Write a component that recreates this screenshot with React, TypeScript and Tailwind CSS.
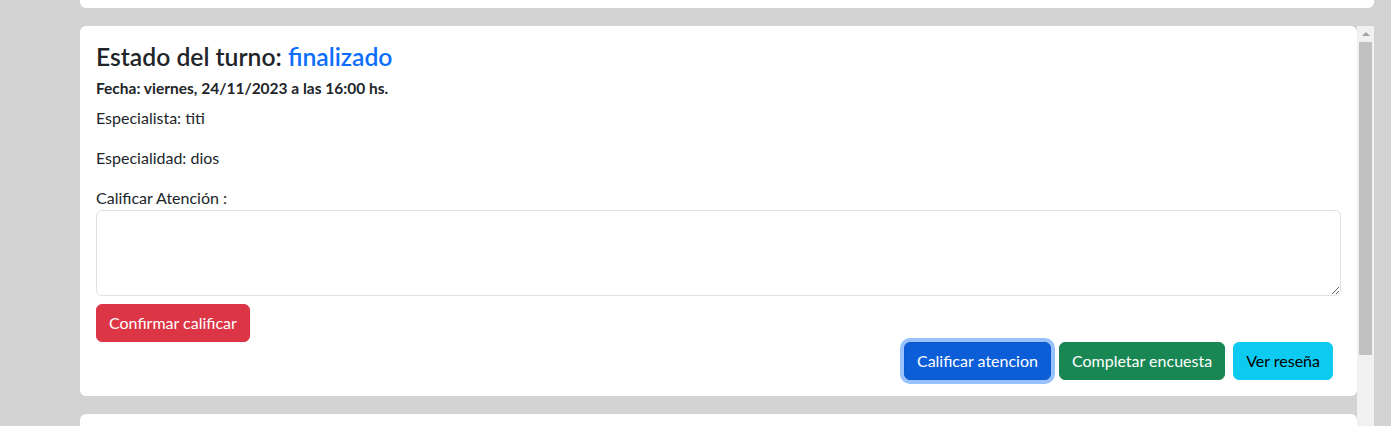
import React from 'react';

function Card({ children }: { children?: React.ReactNode }) {
  return <div className="rounded-md bg-white">{children}</div>;
}

function FakeScrollbar() {
  return (
    <div className="flex w-[17px] shrink-0 flex-col items-center bg-[#f1f1f1]">
      {/* up arrow button */}
      <div className="flex h-[16px] w-full items-center justify-center">
        <span className="block h-0 w-0 border-x-[4px] border-b-[4px] border-x-transparent border-b-[#a3a3a3]" />
      </div>
      {/* thumb */}
      <div className="h-[313px] w-[13px] bg-[#c1c1c1]" />
    </div>
  );
}

export default function App() {
  return (
    <div className="h-[426px] overflow-hidden bg-[#d3d3d3] font-['Segoe_UI',Lato,'Noto_Sans',sans-serif] text-[#212529]">
      <div className="ml-[80px] flex w-[1294px] flex-col gap-[18px]">
        {/* previous card, scrolled mostly out of view */}
        <div className="h-[8px] rounded-b-md bg-white" />

        <div className="flex">
          <div className="flex flex-1 flex-col gap-[18px]">
            <Card>
              <div className="flex flex-col p-4">
                <h4 className="mb-2 text-[24.7px] leading-[29px] font-semibold">
                  Estado del turno: <span className="text-[#0d6efd]">finalizado</span>
                </h4>
                <h6 className="mb-2 text-[15.5px] leading-[19px] font-bold">
                  Fecha: viernes, 24/11/2023 a las 16:00 hs.
                </h6>
                <p className="mb-4 text-[16px] leading-6">Especialista: titi</p>
                <p className="mb-4 text-[16px] leading-6">Especialidad: dios</p>
                <label className="text-[16px] leading-6">Calificar Atención :</label>
                <textarea className="h-[86px] w-full resize-y rounded-md border border-[#dee2e6] bg-white px-3 py-1.5 text-[16px] outline-none" />
                <div className="mt-2">
                  <button className="rounded-md border border-[#dc3545] bg-[#dc3545] px-3 py-1.5 text-[16px] leading-6 text-white">
                    Confirmar calificar
                  </button>
                </div>
                <div className="flex justify-end">
                  <button className="mr-2 rounded-md border border-[#0a58ca] bg-[#0b5ed7] px-3 py-1.5 text-[16px] leading-6 text-white shadow-[0_0_0_4px_rgba(49,132,253,0.5)]">
                    Calificar atencion
                  </button>
                  <button className="mr-2 rounded-md border border-[#198754] bg-[#198754] px-3 py-1.5 text-[16px] leading-6 text-white">
                    Completar encuesta
                  </button>
                  <button className="mr-2 rounded-md border border-[#0dcaf0] bg-[#0dcaf0] px-3 py-1.5 text-[16px] leading-6 text-black">
                    Ver reseña
                  </button>
                </div>
              </div>
            </Card>
            <div className="h-[100px] rounded-md bg-white" />
          </div>
          <FakeScrollbar />
        </div>
      </div>
    </div>
  );
}
